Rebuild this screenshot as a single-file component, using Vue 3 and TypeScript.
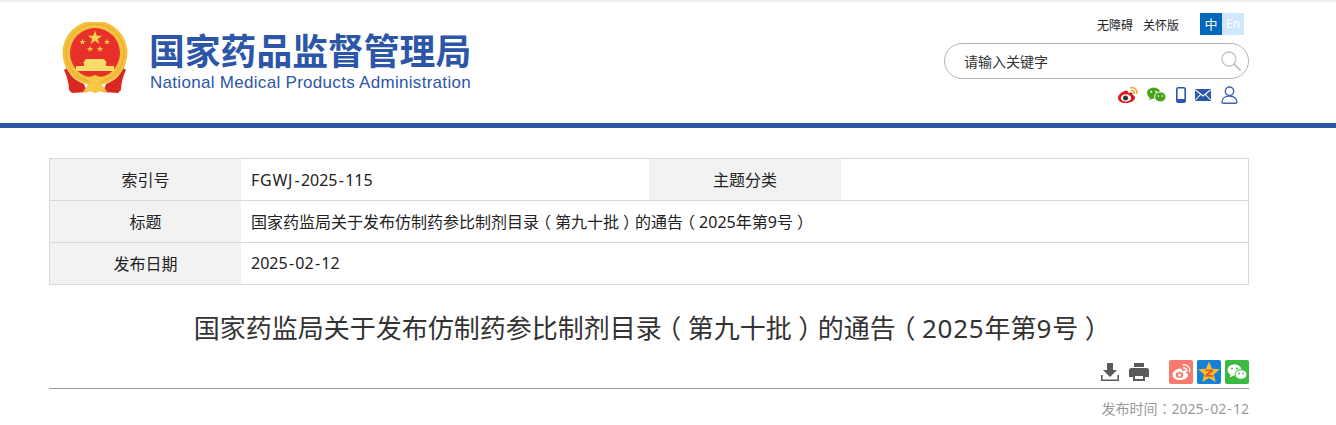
<script setup lang="ts">
interface Row { label: string; value: string; label2?: string; value2?: string }
interface Segment { text: string; kind: string }

const rows: Row[] = [
  { label: '索引号', value: 'FGWJ-2025-115', label2: '主题分类', value2: '' },
  { label: '标题', value: '国家药监局关于发布仿制药参比制剂目录（第九十批）的通告（2025年第9号）' },
  { label: '发布日期', value: '2025-02-12' }
]
const title = '国家药监局关于发布仿制药参比制剂目录（第九十批）的通告（2025年第9号）'
const date = '发布时间：2025-02-12'

const kinds: Record<string, string> = { '（': 'paren', '）': 'paren', '：': 'colon', '-': 'hyphen' }

function split(text: string): Segment[] {
  const parts = text.match(/[（）：-]|[0-9]+|[A-Za-z]+|[^（）：0-9A-Za-z-]+/g) ?? []
  return parts.map((p) => {
    const kind = kinds[p] ?? (/^[0-9]/.test(p) ? 'digit' : /^[A-Za-z]/.test(p) ? 'letter' : 'run')
    return { text: p, kind }
  })
}

const smallStars = [
  { x: 20.5, y: 20 },
  { x: 45, y: 20 },
  { x: 28, y: 27 },
  { x: 38, y: 27 }
]
</script>

<template>
  <div class="page">
    <header class="header">
      <div class="header-inner">
        <div class="brand">
          <svg class="emblem" viewBox="0 0 66 71" width="66" height="71">
            <defs>
              <path id="star" d="M0-1L.235-.309H.951L.363.118.588.809 0 .382-.588.809-.363.118-.951-.309H-.235Z" />
            </defs>
            <path d="M5 46c3 8 9 13 17 16l3 8-15 1-3-3c0-6-2-14-5-20zM61 46c-3 8-9 13-17 16l-3 8 15 1 3-3c0-6 2-14 5-20z" fill="#d9281f" />
            <circle cx="33" cy="31" r="32.500" fill="#f4c13f" />
            <circle cx="33" cy="31" r="29" fill="none" stroke="#e8a92f" stroke-width="1" />
            <circle cx="33" cy="31" r="25" fill="#e8302a" />
            <use href="#star" transform="translate(33 16) scale(7.500)" fill="#f9d448" />
            <use v-for="s in smallStars" :key="s.x" href="#star" :transform="`translate(${s.x} ${s.y}) scale(3.200)`" fill="#f9d448" />
            <path d="M24 37h18l3 4H21zM22 41h22v3H22zM14 44h38v5H14z" fill="#fbdc6a" />
            <path d="M33 53c-3 2-7 2-11 2 1 3 4 4 7 5-2 3-6 6-8 10l8-1 4 2 4-2 8 1c-2-4-6-7-8-10 3-1 6-2 7-5-4 0-8 0-11-2z" fill="#f6c845" stroke="#e8a92f" stroke-width=".5" />
          </svg>
          <div class="brand-text">
            <div class="brand-cn">国家药品监督管理局</div>
            <div class="brand-en">National Medical Products Administration</div>
          </div>
        </div>
        <div class="tools">
          <div class="tool-links">
            <span class="tool-link">无障碍</span>
            <span class="tool-link">关怀版</span>
            <div class="lang">
              <span class="lang-cn">中</span>
              <span class="lang-en">En</span>
            </div>
          </div>
          <div class="search">
            <span class="search-text">请输入关键字</span>
            <svg viewBox="0 0 20 20" width="20" height="20" class="search-icon">
              <circle cx="8" cy="8" r="7" fill="none" stroke="#c4c4c4" stroke-width="1.300" />
              <path d="M13 13l6 6" stroke="#c4c4c4" stroke-width="2" stroke-linecap="round" />
            </svg>
          </div>
          <div class="socials">
            <svg viewBox="0 0 20 16" width="20" height="16">
              <path d="M8 3.500C4 4.500 0 8 0 11c0 3 3.500 5 8 5 5 0 9-2.500 9-5.500 0-1.500-1.500-2.200-2.500-2.500.6-1.500.2-3-2.500-2.500-1 .2-2 .7-2 .7.300-1.500-.2-2.700-2-2.700z" fill="#e0141b" />
              <ellipse cx="8" cy="11" rx="5.200" ry="3.700" fill="#fff" />
              <circle cx="7.500" cy="11" r="2.500" fill="#333" />
              <path d="M13 .8c3.500-.7 6.500 2.200 6 5.700M13.300 3.500c1.700-.3 3.200 1.100 2.900 2.800" fill="none" stroke="#f0a81e" stroke-width="1.500" stroke-linecap="round" />
            </svg>
            <svg viewBox="0 0 20 16" width="19" height="16">
              <ellipse cx="7" cy="6" rx="7" ry="6" fill="#4aa41a" />
              <path d="M3 10l-.5 3.500L6 11.500z" fill="#4aa41a" />
              <ellipse cx="14" cy="10" rx="6" ry="5.300" fill="#4aa41a" stroke="#fff" stroke-width="1" />
              <circle cx="4.500" cy="4.500" r="1" fill="#fff" /><circle cx="9.500" cy="4.500" r="1" fill="#fff" />
              <circle cx="12" cy="9" r=".8" fill="#fff" /><circle cx="16" cy="9" r=".8" fill="#fff" />
            </svg>
            <svg viewBox="0 0 10 16" width="10" height="16">
              <rect x=".8" y=".8" width="8.400" height="14.400" rx="1.500" fill="#fff" stroke="#2c56a8" stroke-width="1.600" />
              <rect x=".8" y="12" width="8.400" height="3.200" rx="1" fill="#2c56a8" />
            </svg>
            <svg viewBox="0 0 16 12" width="16" height="12">
              <rect width="16" height="12" rx="1" fill="#2c56a8" />
              <path d="M.5 1l7.500 6 7.500-6M.5 11l5-5.500M15.500 11l-5-5.500" fill="none" stroke="#fff" stroke-width="1.100" />
            </svg>
            <svg viewBox="0 0 17 18" width="17" height="18" class="user">
              <circle cx="8.500" cy="5.200" r="4.200" fill="none" stroke="#3f62ab" stroke-width="1.400" />
              <path d="M1 16c0-3.500 3-6 7.500-6s7.500 2.500 7.500 6c0 1-.5 1.300-1.500 1.300h-12c-1 0-1.500-.3-1.500-1.300z" fill="none" stroke="#3f62ab" stroke-width="1.400" />
            </svg>
          </div>
        </div>
      </div>
    </header>

    <main class="main">
      <div class="meta">
        <div v-for="row in rows" :key="row.label" class="meta-row">
          <div class="cell label">{{ row.label }}</div>
          <div class="cell value" :class="{ narrow: row.label2 }">
            <span v-for="(seg, i) in split(row.value)" :key="i" :class="seg.kind">{{ seg.text }}</span>
          </div>
          <template v-if="row.label2">
            <div class="cell label label2">{{ row.label2 }}</div>
            <div class="cell value">{{ row.value2 }}</div>
          </template>
        </div>
      </div>

      <h1 class="title">
        <span v-for="(seg, i) in split(title)" :key="i" :class="seg.kind">{{ seg.text }}</span>
      </h1>

      <div class="actions">
        <svg viewBox="0 0 18 18" width="18" height="18">
          <path d="M6 0h6v7h4l-7 7-7-7h4z" fill="#5a5a5a" />
          <path d="M.8 12v5.200h16.400V12" fill="none" stroke="#5a5a5a" stroke-width="1.600" />
        </svg>
        <svg viewBox="0 0 20 18" width="20" height="18" class="print">
          <path d="M5 0h10v4H5zM2.500 5h15A2.500 2.500 0 0 1 20 7.500V14h-4v-3H4v3H0V7.500A2.500 2.500 0 0 1 2.500 5z" fill="#5a5a5a" />
          <path d="M4 11h12v7H4z" fill="#5a5a5a" />
          <path d="M6 13h8v3H6z" fill="#fff" />
        </svg>
        <div class="shares">
          <svg viewBox="0 0 24 24" width="24" height="24">
            <rect width="24" height="24" rx="2" fill="#f77a6c" />
            <path d="M10 8.500C6.500 9.500 3.500 12 3.500 15c0 3 3.500 5 7.500 5 4.500 0 8-2.300 8-5 0-1.400-1.300-2-2.200-2.300.6-1.500.2-2.700-2-2.300-.9.200-1.800.6-1.800.6.300-1.700-.7-3-3-2.500z" fill="#fff" />
            <ellipse cx="10.500" cy="15" rx="3.800" ry="3" fill="#f77a6c" />
            <circle cx="10.500" cy="15" r="1.500" fill="#fff" />
            <path d="M14 5c4-1 7.500 2.500 6.500 6.500M14.500 8c2-.4 3.700 1.300 3.200 3.200" fill="none" stroke="#fff" stroke-width="1.400" stroke-linecap="round" />
          </svg>
          <svg viewBox="0 0 24 24" width="24" height="24">
            <rect width="24" height="24" rx="2" fill="#1382d6" />
            <path d="M12 1.500l3 7.200 7.800.6-6 5.100 1.900 7.600L12 17.900 5.300 22l1.900-7.600-6-5.100 7.800-.6z" fill="#f8bc2e" />
            <path d="M8.500 9.500h7.500v1.500l-4.500 4h4.500v1.800H8v-1.600l4.600-4H8.500z" fill="#e2611c" />
          </svg>
          <svg viewBox="0 0 24 24" width="24" height="24">
            <rect width="24" height="24" rx="2" fill="#3cb93f" />
            <ellipse cx="9.500" cy="10" rx="7" ry="5.800" fill="#fff" />
            <path d="M5.500 14l-.5 3.500 3.500-2z" fill="#fff" />
            <ellipse cx="16" cy="14.500" rx="6" ry="4.800" fill="#fff" stroke="#3cb93f" stroke-width="1" />
            <circle cx="7" cy="8.500" r="1" fill="#3cb93f" /><circle cx="12" cy="8.500" r="1" fill="#3cb93f" />
            <circle cx="14" cy="13.500" r=".9" fill="#3cb93f" /><circle cx="18" cy="13.500" r=".9" fill="#3cb93f" />
          </svg>
        </div>
      </div>

      <div class="date">
        <span v-for="(seg, i) in split(date)" :key="i" :class="seg.kind">{{ seg.text }}</span>
      </div>
    </main>
  </div>
</template>

<style>
html, body { margin: 0; background: #fff; overflow: hidden; }
</style>

<style scoped>
.page {
  width: 1336px;
  height: 425px;
  overflow: hidden;
  font-family: "Noto Sans", "Noto Sans CJK SC", sans-serif;
  color: #333;
}
.hyphen { padding: 0 .08em; }
.letter { letter-spacing: .047em; }
.paren {
  font-family: "Noto Sans CJK SC", sans-serif;
  font-feature-settings: "halt";
  padding: 0 .25em;
}
.colon { font-family: "Noto Sans CJK TC", sans-serif; }
.header {
  height: 121px;
  border-top: 2px solid #eeeeee;
  border-bottom: 5px solid #2c56a8;
}
.header-inner {
  width: 1200px;
  margin-left: 49px;
  display: flex;
  justify-content: space-between;
}
.brand {
  display: flex;
  align-items: flex-start;
  padding: 20px 0 0 13px;
}
.emblem { flex: none; }
.brand-text { margin-left: 21px; padding-top: 7px; }
.brand-cn {
  font-family: "Noto Sans CJK SC", sans-serif;
  font-size: 35.800px;
  line-height: 40px;
  font-weight: 700;
  color: #2c56a8;
  white-space: nowrap;
}
.brand-en {
  font-family: "Liberation Sans", sans-serif;
  font-size: 17px;
  letter-spacing: .3px;
  line-height: 20px;
  margin: 4px 0 0 1px;
  color: #2c56a8;
  white-space: nowrap;
}
.tools {
  width: 305px;
  display: flex;
  flex-direction: column;
}
.tool-links {
  display: flex;
  justify-content: flex-end;
  align-items: center;
  height: 22px;
  margin-top: 11px;
  padding-right: 5px;
  font-family: "Noto Sans CJK SC", sans-serif;
  font-size: 12px;
  color: #222;
}
.tool-link { margin-right: 10px; }
.lang { display: flex; margin-left: 11px; font-size: 13px; line-height: 22px; color: #fff; }
.lang-cn { width: 22px; text-align: center; background: #0069bb; }
.lang-en { width: 22px; text-align: center; background: #cfe7ff; font-family: "Noto Sans", sans-serif; font-size: 12px; }
.search {
  box-sizing: border-box;
  height: 36px;
  margin-top: 8px;
  border: 1px solid #b4b4b4;
  border-radius: 18px;
  display: flex;
  align-items: center;
  justify-content: space-between;
  padding: 0 7px 0 19px;
}
.search-text {
  font-family: "Noto Sans CJK SC", sans-serif;
  font-size: 14px;
  color: #333;
}
.socials {
  display: flex;
  justify-content: flex-end;
  align-items: center;
  gap: 9.500px;
  height: 18px;
  margin-top: 7px;
  padding-right: 11px;
}
.socials svg:first-child { margin-right: -.5px; }
.user { margin-left: .5px; }
.main { width: 1200px; margin: 30px 0 0 49px; }
.meta {
  border: 1px solid #d8d8d8;
  border-bottom: 0;
  font-size: 16px;
  color: #222;
}
.meta-row {
  display: flex;
  height: 41px;
  border-bottom: 1px solid #d8d8d8;
}
.cell { line-height: 41px; height: 41px; overflow: hidden; white-space: nowrap; }
.label { width: 191px; flex: none; text-align: center; background: #f2f2f2; font-family: "Noto Sans CJK SC", sans-serif; }
.label2 { width: 192px; }
.value { flex: 1; padding-left: 10px; }
.value.narrow { flex: none; width: 398px; line-height: 43px; }
.title {
  margin: 19px 0 0;
  font-size: 26px;
  line-height: 46px;
  font-weight: 400;
  text-align: center;
  color: #333;
  white-space: nowrap;
}
.title .digit { letter-spacing: .03em; }
.actions {
  display: flex;
  justify-content: flex-end;
  align-items: center;
  height: 24px;
  margin-top: 9px;
  padding-bottom: 4px;
  border-bottom: 1px solid #999;
}
.print { margin-left: 10px; }
.shares { display: flex; gap: 4px; margin-left: 20px; }
.date {
  margin-top: 9px;
  text-align: right;
  font-size: 14px;
  line-height: 20px;
  color: #999;
}
</style>
